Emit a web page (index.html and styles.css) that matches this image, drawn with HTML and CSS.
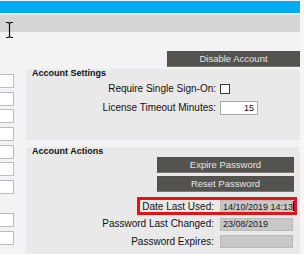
FILE: index.html
```html
<!DOCTYPE html>
<html>
<head>
<meta charset="utf-8">
<link rel="stylesheet" href="styles.css">
</head>
<body>
<div class="app">
  <div class="topbar"></div>
  <div class="divider"></div>
  <div class="toolbar"></div>
  <div class="content">
    <div class="side">
      <div class="field"></div>
      <div class="field"></div>
      <div class="field"></div>
      <div class="field"></div>
      <div class="field"></div>
      <div class="field"></div>
      <div class="field"></div>
      <div class="side-gap"></div>
      <div class="field"></div>
      <div class="field"></div>
    </div>
    <div class="main">
      <button class="btn btn-disable">Disable Account</button>
      <section class="panel panel-settings">
        <h3 class="panel-title">Account Settings</h3>
        <div class="row row-sso"><label>Require Single Sign-On:</label><span class="checkbox"></span></div>
        <div class="row row-timeout"><label>License Timeout Minutes:</label><span class="num">15</span></div>
      </section>
      <section class="panel panel-actions">
        <h3 class="panel-title">Account Actions</h3>
        <div class="actions">
          <button class="btn">Expire Password</button>
          <button class="btn">Reset Password</button>
        </div>
        <div class="info">
          <div class="row highlighted"><label>Date Last Used:</label><span class="ro">14/10/2019 14:13<i class="caret"></i></span><span class="mark"></span></div>
          <div class="row"><label>Password Last Changed:</label><span class="ro">23/08/2019</span></div>
          <div class="row"><label>Password Expires:</label><span class="ro"></span></div>
        </div>
      </section>
    </div>
  </div>
</div>
<svg class="ibeam" width="9" height="18" viewBox="0 0 9 18">
  <path d="M1 1.5h2.3l1.2 1 1.2-1H8M4.5 2.5v13M1 16.5h2.3l1.2-1 1.2 1H8" stroke="#111" stroke-width="1.2" fill="none"/>
</svg>
</body>
</html>
```

FILE: styles.css
```css
html, body {
  margin: 0;
  padding: 0;
}
body {
  width: 304px;
  height: 254px;
  overflow: hidden;
  position: relative;
  background: #f6f6f7;
  font-family: "Liberation Sans", Arial, sans-serif;
  color: #111;
}
.app {
  width: 300px;
  height: 254px;
  background: #f3f3f5;
  overflow: hidden;
}
.topbar {
  margin-top: 1px;
  height: 12px;
  background: #00adef;
}
.divider {
  height: 1.5px;
  background: #efe9ea;
}
.toolbar {
  height: 17.5px;
  background: #d5d5d5;
}
.content {
  display: grid;
  grid-template-columns: 14px 1fr;
  column-gap: 12px;
}
.side {
  padding-top: 42px;
  display: flex;
  flex-direction: column;
  gap: 3.67px;
}
.field {
  box-sizing: border-box;
  width: 30px;
  height: 14px;
  margin-left: -16px;
  background: #fff;
  border: 1px solid #bcbcbc;
}
.side-gap {
  height: 12px;
}
.main {
  padding-top: 19px;
}
.btn {
  display: block;
  box-sizing: border-box;
  height: 16px;
  padding: 0;
  margin: 0;
  background: #555350;
  color: #e4e4e4;
  border: 1px solid #48464433;
  border-bottom-color: #7a7875;
  font-family: "Liberation Sans", Arial, sans-serif;
  font-size: 9.5px;
  line-height: 14px;
  text-align: center;
}
.btn-disable {
  margin-left: 141px;
  width: 133px;
}
.panel {
  background: #e9e9e9;
  border-radius: 3px;
  padding-left: 6px;
}
.panel-settings {
  margin-top: 2px;
  padding-bottom: 25px;
}
.panel-actions {
  margin-top: 7px;
  padding-bottom: 20px;
}
.panel-title {
  margin: 0;
  font-size: 9px;
  line-height: 9px;
  font-weight: bold;
  color: #111;
}
.row {
  display: grid;
  grid-template-columns: 184px auto;
  column-gap: 4px;
  align-items: center;
  justify-items: start;
}
.row label {
  justify-self: end;
  font-size: 10px;
  line-height: 12px;
  white-space: nowrap;
}
.row-sso {
  margin-top: 5px;
  height: 12px;
}
.row-timeout {
  margin-top: 6px;
  height: 14px;
}
.checkbox {
  box-sizing: border-box;
  width: 10px;
  height: 10px;
  background: #fff;
  border: 1px solid #3a3a3a;
}
.num {
  box-sizing: border-box;
  width: 38px;
  height: 14px;
  padding-right: 3px;
  background: #fff;
  border: 1px solid #a9a9a9;
  font-size: 9px;
  line-height: 12px;
  text-align: right;
}
.actions {
  margin-top: 1px;
  margin-left: 125px;
  width: 137px;
  display: flex;
  flex-direction: column;
  gap: 3px;
}
.actions .btn {
  width: 137px;
}
.info {
  margin-top: 8px;
  display: flex;
  flex-direction: column;
  gap: 4.5px;
}
.info .row {
  grid-template-columns: 182px auto;
  column-gap: 6px;
  height: 13px;
  position: relative;
}
.ro {
  box-sizing: border-box;
  width: 73px;
  height: 13px;
  padding-left: 2px;
  background: #c8c8c8;
  border: 1px solid #b9b9b9;
  font-size: 9px;
  line-height: 11px;
  white-space: nowrap;
  color: #1a1a1a;
}
.caret {
  display: inline-block;
  width: 1px;
  height: 10px;
  background: #111;
  vertical-align: -1px;
}
.mark {
  position: absolute;
  top: -3px;
  bottom: -2px;
  left: 105px;
  right: 3px;
  border: 3px solid #e3121b;
  pointer-events: none;
}
.ibeam {
  position: absolute;
  left: 5px;
  top: 21px;
}
```
